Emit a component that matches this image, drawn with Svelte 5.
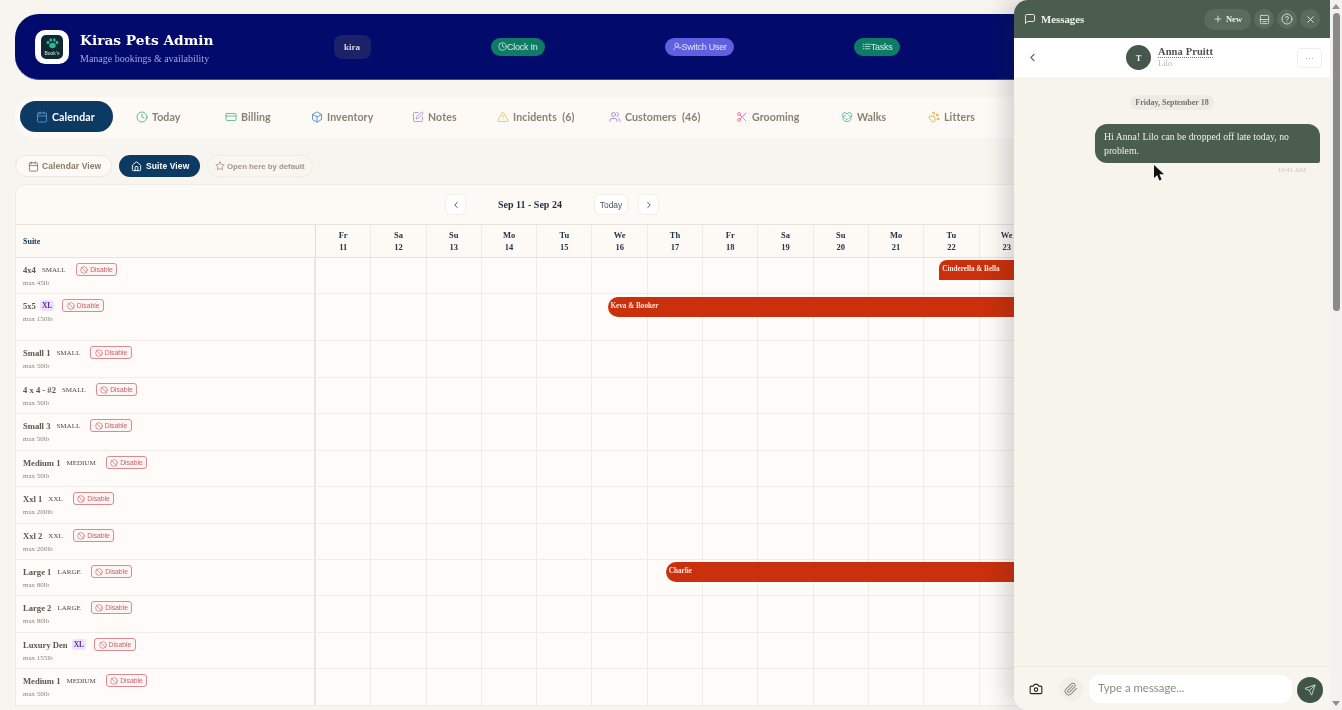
<script>
  const P = {
    calendar: '<rect x="3" y="4" width="18" height="18" rx="2"/><path d="M16 2v4M8 2v4M3 10h18"/>',
    clock: '<circle cx="12" cy="12" r="10"/><path d="M12 6v6l4 2"/>',
    card: '<rect x="2" y="5" width="20" height="14" rx="2"/><path d="M2 10h20"/>',
    box: '<path d="M21 16V8a2 2 0 0 0-1-1.73l-7-4a2 2 0 0 0-2 0l-7 4A2 2 0 0 0 3 8v8a2 2 0 0 0 1 1.73l7 4a2 2 0 0 0 2 0l7-4A2 2 0 0 0 21 16z"/><path d="M3.27 6.96 12 12.01l8.73-5.05M12 22.08V12"/>',
    pen: '<path d="M12 3H5a2 2 0 0 0-2 2v14a2 2 0 0 0 2 2h14a2 2 0 0 0 2-2v-7"/><path d="M18.375 2.625a2.121 2.121 0 1 1 3 3L12 15l-4 1 1-4Z"/>',
    alert: '<path d="m21.73 18-8-14a2 2 0 0 0-3.48 0l-8 14A2 2 0 0 0 4 21h16a2 2 0 0 0 1.73-3"/><path d="M12 9v4M12 17h.01"/>',
    users: '<path d="M16 21v-2a4 4 0 0 0-4-4H6a4 4 0 0 0-4 4v2"/><circle cx="9" cy="7" r="4"/><path d="M22 21v-2a4 4 0 0 0-3-3.87M16 3.13a4 4 0 0 1 0 7.75"/>',
    scissors: '<circle cx="6" cy="6" r="3"/><circle cx="6" cy="18" r="3"/><path d="M20 4 8.12 15.88M14.47 14.48 20 20M8.12 8.12 12 12"/>',
    dog: '<path d="M11.25 16.25h1.5L12 17zM16 14v.5M8 14v.5"/><path d="M4.42 11.247A13.152 13.152 0 0 0 4 14.556C4 18.728 7.582 21 12 21s8-2.272 8-6.444a11.702 11.702 0 0 0-.493-3.309"/><path d="M8.5 8.5c-.384 1.05-1.083 2.028-2.344 2.5-1.931.722-3.576-.297-3.656-1-.113-.994 1.177-6.53 4-7 1.923-.321 3.651.845 3.651 2.235A7.497 7.497 0 0 1 14 5.277c0-1.39 1.844-2.598 3.767-2.277 2.823.47 4.113 6.006 4 7-.08.703-1.725 1.722-3.656 1-1.261-.472-1.855-1.45-2.239-2.5"/>',
    paw: '<circle cx="11" cy="4" r="2"/><circle cx="18" cy="8" r="2"/><circle cx="20" cy="16" r="2"/><path d="M9 10a5 5 0 0 1 5 5v3.5a3.5 3.5 0 0 1-6.84 1.045Q6.52 17.48 4.46 16.84A3.5 3.5 0 0 1 5.5 10Z"/>',
    home: '<path d="M3 10a2 2 0 0 1 .709-1.528l7-6a2 2 0 0 1 2.582 0l7 6A2 2 0 0 1 21 10v9a2 2 0 0 1-2 2H5a2 2 0 0 1-2-2z"/><path d="M15 21v-8a1 1 0 0 0-1-1h-4a1 1 0 0 0-1 1v8"/>',
    star: '<path d="M12 2l3.09 6.26L22 9.27l-5 4.87 1.18 6.88L12 17.77l-6.18 3.25L7 14.14 2 9.27l6.91-1.01z"/>',
    ban: '<circle cx="12" cy="12" r="10"/><path d="m4.9 4.9 14.2 14.2"/>',
    msg: '<path d="M21 15a2 2 0 0 1-2 2H7l-4 4V5a2 2 0 0 1 2-2h14a2 2 0 0 1 2 2z"/>',
    plus: '<path d="M5 12h14M12 5v14"/>',
    x: '<path d="M18 6 6 18M6 6l12 12"/>',
    help: '<circle cx="12" cy="12" r="10"/><path d="M9.09 9a3 3 0 0 1 5.83 1c0 2-3 3-3 3M12 17h.01"/>',
    rows: '<rect x="3" y="3" width="18" height="18" rx="2"/><path d="M3 12h18M8 16.5h8"/>',
    camera: '<path d="M14.5 4h-5L7 7H4a2 2 0 0 0-2 2v9a2 2 0 0 0 2 2h16a2 2 0 0 0 2-2V9a2 2 0 0 0-2-2h-3l-2.5-3z"/><circle cx="12" cy="13" r="3"/>',
    clip: '<path d="m21.44 11.05-9.19 9.19a6 6 0 0 1-8.49-8.49l8.57-8.57A4 4 0 1 1 18 8.84l-8.59 8.57a2 2 0 0 1-2.83-2.83l8.49-8.48"/>',
    send: '<path d="M14.536 21.686a.5.5 0 0 0 .937-.024l6.5-19a.496.496 0 0 0-.635-.635l-19 6.5a.5.5 0 0 0-.024.937l7.93 3.18a2 2 0 0 1 1.112 1.11z"/><path d="m21.854 2.147-10.94 10.939"/>',
    left: '<path d="m15 18-6-6 6-6"/>',
    right: '<path d="m9 18 6-6-6-6"/>',
    user: '<circle cx="10" cy="8" r="5"/><path d="M2 21a8 8 0 0 1 13-6M17 13l4 4M21 13l-4 4"/>',
    tasks: '<path d="M3 6h2M3 12h2M3 18h2M9 6h12M9 12h12M9 18h12"/>'
  };

  const tabs = [
    { label: 'Calendar', icon: 'calendar', color: '#5f9bd0', w: 93 },
    { label: 'Today', icon: 'clock', color: '#49b08a', w: 77, ml: 7 },
    { label: 'Billing', icon: 'card', color: '#4dbb8f', w: 77, ml: 12 },
    { label: 'Inventory', icon: 'box', color: '#3f84cc', w: 92, ml: 9 },
    { label: 'Notes', icon: 'pen', color: '#a98cdc', w: 76, ml: 9 },
    { label: 'Incidents  (6)', icon: 'alert', color: '#e8bd4e', w: 108, ml: 9 },
    { label: 'Customers  (46)', icon: 'users', color: '#9b7fe0', w: 123, ml: 4 },
    { label: 'Grooming', icon: 'scissors', color: '#e56aa5', w: 96, ml: 4 },
    { label: 'Walks', icon: 'dog', color: '#3fb7a0', w: 76, ml: 9 },
    { label: 'Litters', icon: 'paw', color: '#d8a93f', w: 78, ml: 11 }
  ];

  const days = [['Fr',11],['Sa',12],['Su',13],['Mo',14],['Tu',15],['We',16],['Th',17],['Fr',18],['Sa',19],['Su',20],['Mo',21],['Tu',22],['We',23],['Th',24]];
  const DAY = 55.3;

  const rows = [
    { name: '4x4', size: 'SMALL', max: '45lb', h: 36, bar: { label: 'Cinderella & Bella', day: 11, off: 15, top: 2, cut: true } },
    { name: '5x5', size: 'XL', max: '150lb', h: 47, bar: { label: 'Keva & Booker', day: 5, off: 15, top: 3 } },
    { name: 'Small 1', size: 'SMALL', max: '50lb', h: 37 },
    { name: '4 x 4 - #2', size: 'SMALL', max: '50lb', h: 36 },
    { name: 'Small 3', size: 'SMALL', max: '50lb', h: 37 },
    { name: 'Medium 1', size: 'MEDIUM', max: '50lb', h: 36 },
    { name: 'Xxl 1', size: 'XXL', max: '200lb', h: 37 },
    { name: 'Xxl 2', size: 'XXL', max: '200lb', h: 36 },
    { name: 'Large 1', size: 'LARGE', max: '80lb', h: 36, bar: { label: 'Charlie', day: 6, off: 18, top: 2 } },
    { name: 'Large 2', size: 'LARGE', max: '80lb', h: 37 },
    { name: 'Luxury Den', size: 'XL', max: '155lb', h: 36 },
    { name: 'Medium 1', size: 'MEDIUM', max: '50lb', h: 37 }
  ];
</script>

{#snippet icon(name, size = 12, color = 'currentColor', sw = 2)}
  <svg class="ic" width={size} height={size} viewBox="0 0 24 24" fill="none" stroke={color} stroke-width={sw} stroke-linecap="round" stroke-linejoin="round">{@html P[name]}</svg>
{/snippet}

<div class="page">
  <div class="main">
    <header class="hero">
      <div class="brand">
        <div class="logo">
          <div class="logo-in">
            <svg width="13" height="11" viewBox="0 0 26 22" fill="#2fb58f"><ellipse cx="13" cy="15" rx="6.5" ry="5.5"/><ellipse cx="4" cy="9" rx="2.8" ry="3.5"/><ellipse cx="9.5" cy="4" rx="2.8" ry="3.6"/><ellipse cx="16.5" cy="4" rx="2.8" ry="3.6"/><ellipse cx="22" cy="9" rx="2.8" ry="3.5"/></svg>
            <span>Book'n</span>
          </div>
        </div>
        <div class="brand-text">
          <div class="title">Kiras Pets Admin</div>
          <div class="sub">Manage bookings &amp; availability</div>
        </div>
      </div>
      <div class="kira">kira</div>
      <div class="pill green">{@render icon('clock', 9)}Clock In</div>
      <div class="pill violet">{@render icon('user', 9)}Switch User</div>
      <div class="pill green">{@render icon('tasks', 9)}Tasks</div>
    </header>

    <nav class="tabs">
      {#each tabs as t, i}
        <div class="tab" class:active={i === 0} style="width:{t.w}px;margin-left:{t.ml ?? 0}px">
          {@render icon(t.icon, 12, t.color, 1.7)}<span>{t.label}</span>
        </div>
      {/each}
    </nav>

    <div class="views">
      <div class="view plain">{@render icon('calendar', 11, '#8b7a68')}Calendar View</div>
      <div class="view on">{@render icon('home', 11, '#fff')}Suite View</div>
      <div class="view faint">{@render icon('star', 10, '#a89a88')}Open here by default</div>
    </div>

    <section class="card">
      <div class="toolbar">
        <div class="nav">{@render icon('left', 10, '#333')}</div>
        <div class="range">Sep 11 - Sep 24</div>
        <div class="nav today">Today</div>
        <div class="nav">{@render icon('right', 10, '#333')}</div>
      </div>
      <div class="line head">
        <div class="suite-h">Suite</div>
        {#each days as d}
          <div class="day"><b>{d[0]}</b><b>{d[1]}</b></div>
        {/each}
      </div>
      {#each rows as r}
        <div class="line row" style="height:{r.h}px">
          <div class="suite">
            <div class="suite-top">
              <span class="nm">{r.name}</span>
              <span class="size" class:xl={r.size === 'XL'}>{r.size}</span>
              <span class="dis">{@render icon('ban', 8, '#c9606a', 1.8)}Disable</span>
            </div>
            <div class="max">max {r.max}</div>
          </div>
          {#each days as d}
            <div class="cell"></div>
          {/each}
          {#if r.bar}
            <div class="bar" class:cut={r.bar.cut} style="left:{300 + r.bar.day * DAY + r.bar.off}px;top:{r.bar.top}px">{r.bar.label}</div>
          {/if}
        </div>
      {/each}
    </section>
  </div>

  <aside class="panel">
    <div class="p-top">
      {@render icon('msg', 12, '#fff', 1.7)}
      <span class="p-title">Messages</span>
      <div class="p-new">{@render icon('plus', 10, '#e9ece8')}New</div>
      <div class="p-ic">{@render icon('rows', 11, '#e9ece8', 1.7)}</div>
      <div class="p-ic">{@render icon('help', 12, '#e9ece8', 1.7)}</div>
      <div class="p-ic">{@render icon('x', 11, '#e9ece8')}</div>
    </div>
    <div class="p-contact">
      <span class="back">{@render icon('left', 13, '#666')}</span>
      <div class="contact">
        <div class="avatar">T</div>
        <div>
          <div class="cname">Anna Pruitt</div>
          <div class="cpet">Lilo</div>
        </div>
      </div>
      <div class="more">···</div>
    </div>
    <div class="p-body">
      <div class="date">Friday, September 18</div>
      <div class="bubble">Hi Anna! Lilo can be dropped off late today, no problem.</div>
      <div class="time">10:41 AM</div>
    </div>
    <div class="p-foot">
      <span class="cam">{@render icon('camera', 14, '#222', 1.9)}</span>
      <div class="clip">{@render icon('clip', 14, '#8d8d84', 1.8)}</div>
      <div class="input">Type a message...</div>
      <div class="sendb">{@render icon('send', 12, '#d6ddd6', 1.8)}</div>
    </div>
    <svg class="cursor" width="11" height="16" viewBox="0 0 11 16"><path d="M0 0v13l3.2-3 2.2 5.4 2.2-.9-2.2-5.2H10z" fill="#111"/></svg>
  </aside>

  <div class="sb">
    <span class="arr up"></span>
    <div class="track"><div class="thumb"></div></div>
    <span class="arr down"></span>
  </div>
</div>

<style>
  :global(body) { margin: 0; background: #f8f5f1; }
  .page { position: relative; width: 1342px; height: 710px; overflow: hidden; display: flex; background: #f8f5f1; font-family: "Liberation Serif", serif; filter: blur(.35px); }
  .main { width: 1330px; flex: none; padding: 14px 0 0 15px; box-sizing: border-box; overflow: hidden; }
  .ic { flex: none; display: block; }

  .hero { height: 66px; box-sizing: border-box; background: #020b6b; border-bottom: 1px solid #3a46b0; border-radius: 24px 0 0 24px; padding: 0 20px; display: flex; align-items: center; gap: 120px; }
  .brand { display: flex; align-items: center; gap: 11px; }
  .brand-text { padding-top: 3px; }
  .logo { width: 34px; height: 34px; border-radius: 10px; background: #fff; display: flex; align-items: center; justify-content: center; }
  .logo-in { width: 22px; height: 24px; border-radius: 5px; background: #0d2a33; display: flex; flex-direction: column; align-items: center; justify-content: center; color: #d8e4e2; font: 5px "Liberation Sans", sans-serif; gap: 1px; }
  .title { font: 700 13.75px/18px "DejaVu Serif", serif; color: #fff; white-space: nowrap; }
  .sub { font-size: 10px; line-height: 13px; margin-top: 3px; color: #a3a8d8; white-space: nowrap; }
  .kira { width: 37px; height: 24px; border-radius: 8px; background: #1b2269; color: #d9dbe8; font-weight: 700; font-size: 9px; display: flex; align-items: center; justify-content: center; }
  .pill { height: 18px; padding: 0 7.5px; border-radius: 9px; display: flex; align-items: center; color: #d9ece8; font: 9px "Liberation Sans", sans-serif; letter-spacing: -.25px; white-space: nowrap; }
  .pill.green { background: #0f7a66; }
  .pill.violet { background: #5f5fe0; color: #e4e4fb; }

  .tabs { margin-top: 17px; height: 41px; box-sizing: border-box; display: flex; align-items: flex-start; padding: 4px 0 0 5px; background: #fdfaf6; border-radius: 20px 0 0 20px; }
  .tab { flex: none; height: 31px; box-sizing: border-box; display: flex; align-items: center; gap: 4px; padding-left: 16px; font: 700 10.6px "Lato", sans-serif; color: #8a8074; white-space: pre; letter-spacing: .1px; }
  .tab.active { background: #0c3a63; color: #fff; border-radius: 16px; }

  .views { margin-top: 17px; display: flex; gap: 7px; height: 22px; }
  .view { display: flex; align-items: center; gap: 3px; border-radius: 11px; font: 700 8.5px "Liberation Sans", sans-serif; white-space: nowrap; box-sizing: border-box; letter-spacing: .1px; }
  .plain { width: 97px; padding-left: 12px; background: #fdfaf6; border: 1px solid #ece7e0; color: #8b7a68; }
  .on { width: 81px; padding-left: 12px; background: #0c3a63; color: #fff; gap: 4px; }
  .faint { width: 106px; padding-left: 7px; background: #f9f6f0; border: 1px solid #f1ede6; color: #a29482; font-size: 7.8px; gap: 2px; letter-spacing: 0; }

  .card { margin-top: 7px; width: 1080px; background: #fdfaf6; border-radius: 10px 0 0 0; border-top: 1px solid #f0ece6; border-left: 1px solid #efebe5; }
  .toolbar { height: 40px; box-sizing: border-box; display: flex; align-items: flex-start; padding: 9px 0 0 429px; border-bottom: 1px solid #e6e2dc; }
  .nav { width: 21px; height: 21px; box-sizing: border-box; background: #fff; border: 1px solid #f2eee8; border-radius: 6px; display: flex; align-items: center; justify-content: center; }
  .today { width: 34px; margin-left: 32px; margin-right: 10px; font: 8.5px "Liberation Sans", sans-serif; color: #4a5568; }
  .range { width: 64px; margin-left: 32px; font-weight: 700; font-size: 10px; line-height: 21px; color: #1f2f46; white-space: nowrap; }

  .line { display: grid; grid-template-columns: 300px repeat(14, 55.3px); position: relative; }
  .head { height: 33px; border-bottom: 1px solid #e6e2dc; box-sizing: border-box; }
  .suite-h { display: flex; align-items: center; padding-left: 7px; font-weight: 700; font-size: 8px; color: #15324f; border-right: 1px solid #e2ddd6; }
  .day { display: flex; flex-direction: column; align-items: center; justify-content: center; gap: 3px; font-size: 8.5px; line-height: 9px; color: #22344a; border-right: 1px solid #efebe5; }
  .row { box-sizing: border-box; border-bottom: 1px solid #f0ece6; background: #fefbf8; }
  .suite { padding: 5px 0 0 7px; border-right: 2px solid #e8e4de; min-width: 0; }
  .suite-top { display: flex; align-items: center; height: 13px; white-space: nowrap; }
  .nm { font-weight: 700; font-size: 8.6px; color: #5c574f; }
  .size { margin-left: 6px; font-size: 7px; color: #4f4a44; margin-right: 10px; }
  .size.xl { background: #ece3fb; color: #5b2aa8; font-weight: 700; font-size: 7.5px; padding: 1px 2px; border-radius: 3px; margin-left: 4px; margin-right: 8px; }
  .dis { display: flex; align-items: center; gap: 2px; height: 13px; box-sizing: border-box; padding: 0 3.5px; border: 1px solid #d98a92; border-radius: 3px; font: 6.8px "Liberation Sans", sans-serif; color: #cf5b67; background: #fdf6f3; }
  .max { margin-top: 1px; font-size: 7px; line-height: 12px; color: #8b857c; }
  .cell { border-right: 1px solid #efebe5; }
  .bar { position: absolute; right: -10px; height: 20px; background: #c9300b; border-radius: 10px 0 0 10px; color: #fde6dc; font-weight: 700; font-size: 7.2px; line-height: 19px; padding-left: 3px; white-space: nowrap; }
  .bar.cut { border-radius: 8px 0 0 0; }

  .panel { position: absolute; top: 0; left: 1014px; width: 316px; height: 710px; display: flex; flex-direction: column; background: #f7f4ec; border-radius: 14px 0 0 14px; overflow: hidden; box-shadow: -8px 0 22px rgba(40, 40, 40, .2); }
  .p-top { height: 38px; flex: none; box-sizing: border-box; background: #4b5d4f; display: flex; align-items: center; padding: 0 10px; color: #fff; }
  .p-title { font-weight: 700; font-size: 10.8px; margin-left: 5px; margin-right: auto; color: #f0f2ee; }
  .p-new { width: 47px; height: 21px; border-radius: 11px; background: #5a6c5e; display: flex; align-items: center; justify-content: center; gap: 3px; font-weight: 700; font-size: 8.5px; color: #eef0ec; }
  .p-ic { width: 20px; height: 20px; border-radius: 50%; background: #5a6c5e; display: flex; align-items: center; justify-content: center; margin-left: 3px; }
  .p-contact { height: 39px; flex: none; box-sizing: border-box; background: #fff; display: flex; align-items: center; padding: 0 8px 0 12px; position: relative; }
  .back { display: block; }
  .contact { display: flex; align-items: center; gap: 7px; margin-left: 87px; margin-right: auto; }
  .avatar { width: 25px; height: 25px; border-radius: 50%; background: #46584b; color: #eef0ec; font-weight: 700; font-size: 8.5px; display: flex; align-items: center; justify-content: center; }
  .cname { font-weight: 700; font-size: 10.5px; line-height: 11px; color: #55524c; border-bottom: 1px dotted #777; letter-spacing: .1px; }
  .cpet { font-size: 8.5px; line-height: 11px; color: #b9b6b0; }
  .more { width: 25px; height: 20px; box-sizing: border-box; border: 1px solid #f0eee9; border-radius: 4px; display: flex; align-items: center; justify-content: center; color: #999; font-size: 9px; }
  .p-body { flex: 1; display: flex; flex-direction: column; align-items: flex-end; padding: 18px 10px 0 0; position: relative; border-bottom: 1px solid #ebe7dc; }
  .date { align-self: flex-start; margin-left: 116px; height: 15px; width: 84px; background: #eeeae5; border-radius: 8px; font-weight: 700; font-size: 8px; line-height: 15px; text-align: center; color: #75716a; white-space: nowrap; }
  .bubble { margin-top: 14px; width: 225px; height: 39px; box-sizing: border-box; padding: 6px 20px 0 9px; background: #4b5d4f; color: #eff1ec; border-radius: 12px 12px 2px 12px; font-size: 9.75px; line-height: 14px; }
  .time { margin-top: 3px; margin-right: 14px; font-size: 7px; line-height: 9px; color: #c9c6bd; }
  .p-foot { height: 43px; flex: none; box-sizing: border-box; display: flex; align-items: center; padding: 0 7px 0 15px; background: #f8f5ee; }
  .cam { display: block; }
  .clip { width: 24px; height: 24px; margin-left: 16px; border-radius: 50%; background: #f2efe8; display: flex; align-items: center; justify-content: center; }
  .input { margin-left: 6px; width: 194px; height: 28px; padding-left: 9px; background: #fff; border-radius: 11px; font: 11.4px/26px "Lato", sans-serif; color: #8b8a85; }
  .sendb { width: 26px; height: 26px; margin-left: 5px; margin-top: 2px; border-radius: 50%; background: #3e5548; display: flex; align-items: center; justify-content: center; }
  .cursor { position: absolute; left: 140px; top: 165px; }

  .sb { width: 12px; flex: none; margin-left: auto; height: 710px; background: #f4f2f0; display: flex; flex-direction: column; align-items: center; position: relative; z-index: 1; }
  .arr { width: 0; height: 0; border-left: 4px solid transparent; border-right: 4px solid transparent; margin: 4px 0; }
  .arr.up { border-bottom: 5px solid #8f8f8f; }
  .arr.down { border-top: 5px solid #8f8f8f; }
  .track { flex: 1; width: 100%; display: flex; justify-content: center; }
  .thumb { width: 7px; height: 298px; background: #8a8a8a; border-radius: 4px; }
</style>
